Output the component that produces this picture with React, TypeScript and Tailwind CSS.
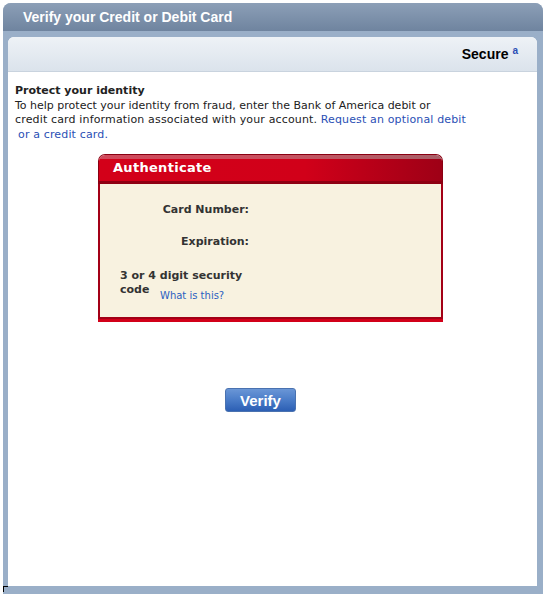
export default function App() {
  return (
    <div className="w-[544px] h-[594px] bg-white overflow-hidden">
      <div className="ml-[3px] mt-[3px] w-[540px] h-[591px] bg-[#9aafc8] rounded-t-[8px] flex flex-col relative">
        {/* title bar */}
        <div className="h-[28px] rounded-t-[8px] bg-gradient-to-b from-[#8c9fb7] to-[#6f849f] flex items-center pl-[20px]">
          <span className="text-white font-bold text-[14px] font-['Liberation_Sans',Arial,sans-serif]">
            Verify your Credit or Debit Card
          </span>
        </div>

        <div className="flex-1 flex flex-col pt-[6px] pl-[5px] pr-[6px] pb-[8px]">
          <div className="flex-1 flex flex-col bg-white rounded-t-[6px] overflow-hidden">
            {/* secure header */}
            <div className="h-[35px] bg-gradient-to-b from-[#eef2f6] to-[#dbe3ec] border-b border-[#c9d3de] flex items-center justify-end pr-[19px]">
              <span className="font-bold text-[14px] text-black font-['Liberation_Sans',Arial,sans-serif]">Secure</span>
              <span className="text-[#2a4fb5] font-bold text-[10px] ml-[4px] relative -top-[4px] font-['Liberation_Sans',Arial,sans-serif]">a</span>
            </div>

            {/* content */}
            <div className="flex-1 flex flex-col font-['DejaVu_Sans',Verdana,sans-serif] text-[11px] leading-[14.5px] text-[#222]">
              <div className="pt-[12px] pl-[7px]">
                <p className="font-bold">Protect your identity</p>
                <p>
                  To help protect your identity from fraud, enter the Bank of America debit or
                  <br />
                  <span className="tracking-[0.15px]">credit card information associated with your account.</span>{" "}
                  <a href="#" className="text-[#2a4fb5] tracking-[0.15px]">
                    Request an optional debit
                    <br />
                    <span className="pl-[3px]">or a credit card.</span>
                  </a>
                </p>
              </div>

              {/* authenticate box */}
              <div className="ml-[90px] mt-[12px] w-[345px] flex flex-col">
                <div className="h-[30px] rounded-t-[7px] border border-[#8a0012] border-b-0 overflow-hidden flex flex-col">
                  <div className="h-[4px] bg-gradient-to-r from-[#d0485a] via-[#c9505f] to-[#a86068]"></div>
                  <div className="flex-1 bg-gradient-to-r from-[#d30019] via-[#d10019] via-60% to-[#9e0016] flex items-center pl-[14px]">
                    <span className="text-white font-bold text-[13px] tracking-[0.3px] leading-none -mt-[5px]">Authenticate</span>
                  </div>
                  <div className="h-[3px] bg-[#8e0012]"></div>
                </div>
                <div className="h-[133px] bg-[#f8f2e0] border-x-2 border-[#a30016] relative font-bold text-[#333]">
                  <div className="absolute right-[192px] top-[19px]">Card Number:</div>
                  <div className="absolute right-[192px] top-[51px]">Expiration:</div>
                  <div className="absolute left-[20px] top-[85px] leading-[14px]">
                    3 or 4 digit security
                    <br />
                    code
                  </div>
                  <a href="#" className="absolute left-[60px] top-[105px] font-normal text-[10px] text-[#2a5fc0]">
                    What is this?
                  </a>
                </div>
                <div className="h-[2px] bg-[#a30016]"></div>
                <div className="h-[3px] bg-[#d20019]"></div>
              </div>

              {/* verify */}
              <div className="flex justify-center mt-[66px] pr-[24px]">
                <button className="w-[71px] h-[24px] rounded-[3px] border border-[#4a72b0] bg-gradient-to-b from-[#6a96d6] via-[#4a7cc8] to-[#2c5fb4] text-white font-bold text-[15px] font-['Liberation_Sans',Arial,sans-serif] leading-none">
                  Verify
                </button>
              </div>
            </div>
          </div>
        </div>
        <div className="absolute left-0 bottom-[2px] w-[5px] h-[6px] border-l border-t border-black"></div>
      </div>
    </div>
  );
}
